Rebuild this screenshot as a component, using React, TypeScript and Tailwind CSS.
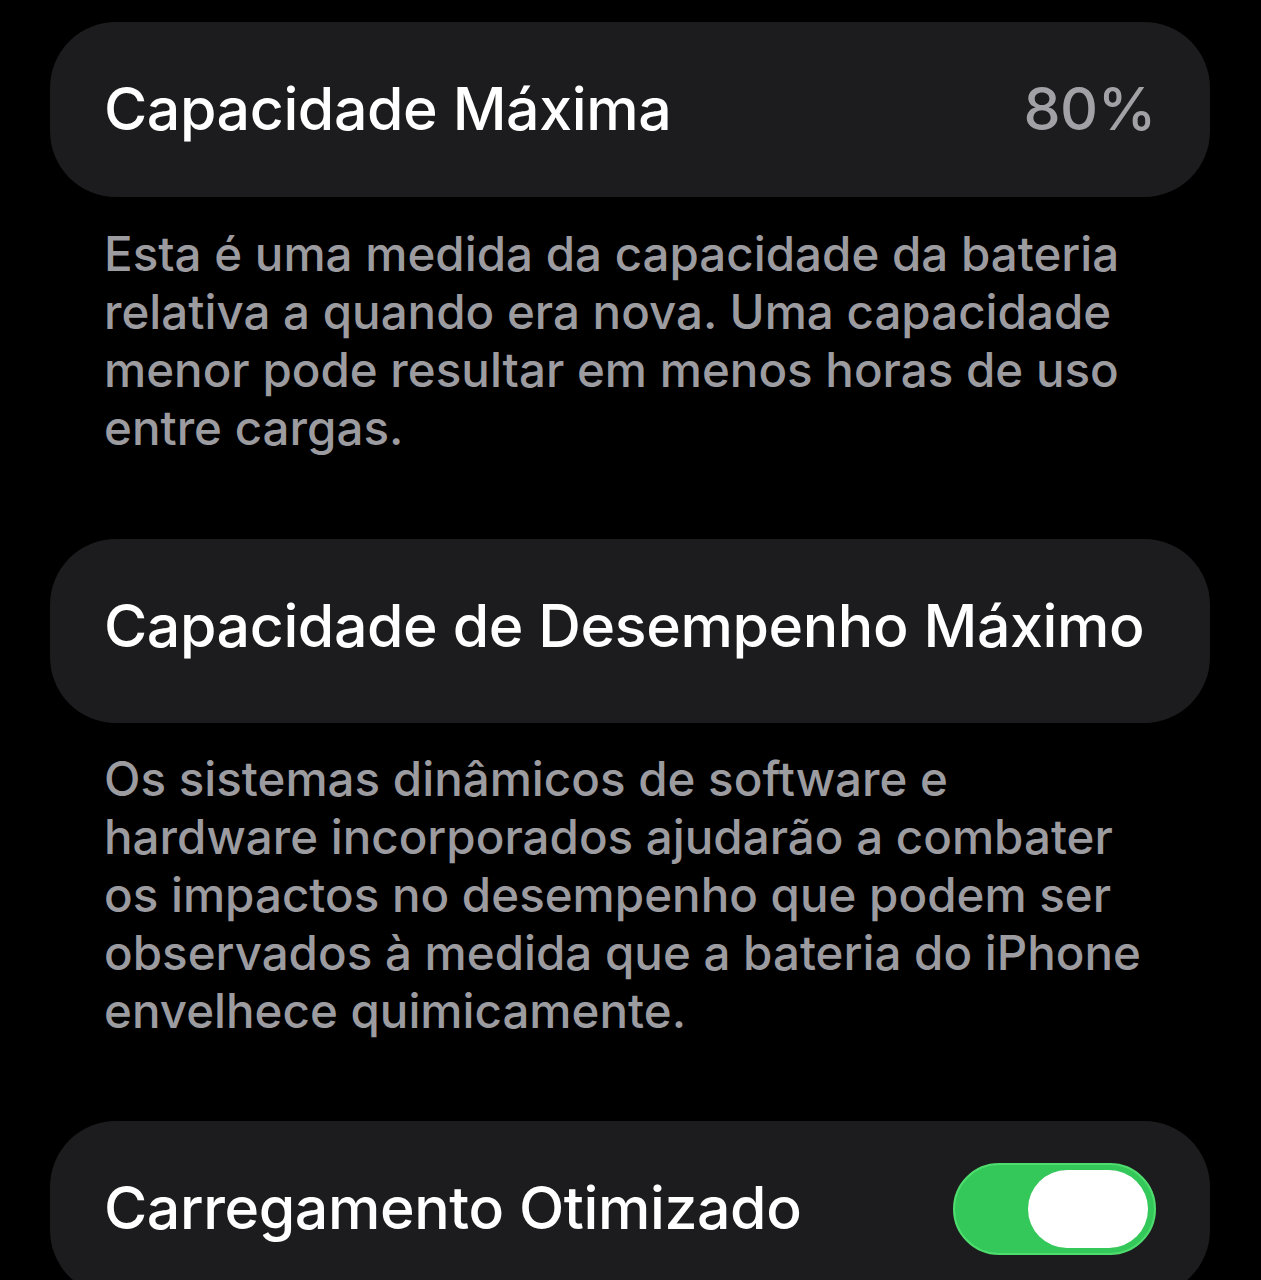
import React from 'react';

interface SettingRowProps {
  title: string;
  children?: React.ReactNode;
  className?: string;
}

const SettingRow: React.FC<SettingRowProps> = ({ title, children, className }) => {
  return (
    <div
      className={`flex items-center justify-between rounded-[66px] bg-[#1c1c1e] pl-[54px] pr-[54px] ${className ?? ''}`}
    >
      <span className="text-[59px] font-medium tracking-[-0.4px] text-white">{title}</span>
      {children}
    </div>
  );
};

const Footnote: React.FC<{ children: React.ReactNode; className?: string }> = ({ children, className }) => (
  <p className={`pl-[54px] pr-[50px] text-[47.5px] leading-[58px] font-medium text-[#9b9ba0] ${className ?? ''}`}>
    {children}
  </p>
);

const Toggle: React.FC<{ on: boolean }> = ({ on }) => (
  <div
    className={`flex h-[92px] w-[203px] items-center rounded-full border-2 border-[#4fdc6e] px-[6px] ${
      on ? 'justify-end bg-[#34c759]' : 'justify-start bg-[#39393d]'
    }`}
  >
    <div className="h-[78px] w-[120px] rounded-full bg-white" />
  </div>
);

export default function App() {
  return (
    <div
      className="min-h-screen overflow-hidden bg-black pl-[50px] pr-[51px] pt-[22px]"
      style={{ fontFamily: 'Inter, "Noto Sans", sans-serif' }}
    >
      <SettingRow title="Capacidade Máxima" className="h-[175px]">
        <span className="text-[59px] font-medium tracking-[-0.4px] text-[#a1a1a6]">80%</span>
      </SettingRow>

      <Footnote className="mt-[28px]">
        Esta é uma medida da capacidade da bateria relativa a quando era nova. Uma capacidade menor pode resultar em
        menos horas de uso entre cargas.
      </Footnote>

      <SettingRow title="Capacidade de Desempenho Máximo" className="mt-[82px] h-[184px] pb-[10px]" />

      <Footnote className="mt-[27px]">
        Os sistemas dinâmicos de software e<br />
        hardware incorporados ajudarão a combater os impactos no desempenho que podem ser observados à medida que a
        bateria do iPhone envelhece quimicamente.
      </Footnote>

      <SettingRow title="Carregamento Otimizado" className="mt-[81px] h-[175px]">
        <Toggle on />
      </SettingRow>
    </div>
  );
}
